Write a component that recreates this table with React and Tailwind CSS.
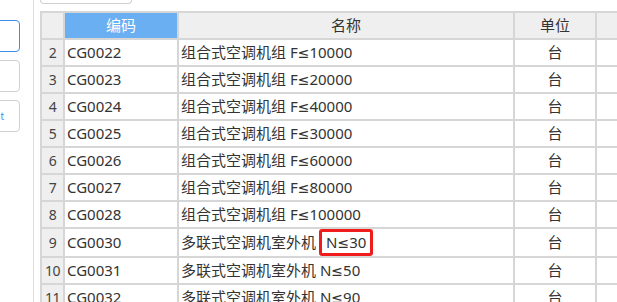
const rows = [
  ["2", "CG0022", "组合式空调机组 F", "10000"],
  ["3", "CG0023", "组合式空调机组 F", "20000"],
  ["4", "CG0024", "组合式空调机组 F", "40000"],
  ["5", "CG0025", "组合式空调机组 F", "30000"],
  ["6", "CG0026", "组合式空调机组 F", "60000"],
  ["7", "CG0027", "组合式空调机组 F", "80000"],
  ["8", "CG0028", "组合式空调机组 F", "100000"],
  ["9", "CG0030", "多联式空调机室外机", "30", true],
  ["10", "CG0031", "多联式空调机室外机 N", "50"],
  ["11", "CG0032", "多联式空调机室外机 N", "90"],
];

const Le = () => <span style={{ fontFamily: '"DejaVu Sans", sans-serif' }} className="text-[14px]">≤</span>;

export default function App() {
  return (
    <div
      className="flex w-[617px] h-[302px] overflow-hidden bg-white text-[#333]"
      style={{ fontFamily: '"Noto Sans", "Noto Sans CJK SC", sans-serif' }}
    >
      {/* left side panel */}
      <div className="w-[34px] shrink-0 border-r border-[#dcdcdc] flex flex-col gap-[8px] pt-[20px] overflow-hidden">
        <div className="w-[40px] h-[32px] -ml-[20px] rounded-[4px] border border-[#3f8fe6]" />
        <div className="w-[40px] h-[32px] -ml-[20px] rounded-[4px] border border-[#d0d0d0]" />
        <div className="w-[40px] h-[32px] -ml-[20px] rounded-[4px] border border-[#d0d0d0] flex items-center justify-end pr-[15px] text-[10px] text-[#3f8fe6] leading-none">
          t
        </div>
      </div>

      {/* main */}
      <div className="flex-1 pl-[6px] flex flex-col overflow-hidden">
        <div className="w-[92px] h-[4px] shrink-0 rounded-b-[5px] border border-t-0 border-[#d0d0d0]" />
        <div className="mt-[7px]">
          <table className="table-fixed border-collapse w-[620px] text-[15px]">
            <colgroup>
              <col className="w-[23px]" />
              <col className="w-[114px]" />
              <col className="w-[336px]" />
              <col className="w-[82px]" />
              <col className="w-[65px]" />
            </colgroup>
            <thead>
              <tr className="h-[27px]">
                <th className="bg-[#efefef] border-2 border-[#d6d6d6]" />
                <th className="bg-[#6aaff2] border-2 border-[#d6d6d6] font-normal text-white">编码</th>
                <th className="bg-[#efefef] border-2 border-[#d6d6d6] font-normal text-[#333]">名称</th>
                <th className="bg-[#efefef] border-2 border-[#d6d6d6] font-normal text-[#333]">单位</th>
                <th className="bg-[#efefef] border-2 border-[#d6d6d6]" />
              </tr>
            </thead>
            <tbody>
              {rows.map((r) => (
                <tr key={r[0]} className="h-[27px]">
                  <td className="bg-[#efefef] border-2 border-[#d6d6d6] text-center text-[14px] text-[#444] p-0 tracking-[-0.5px]">
                    {r[0]}
                  </td>
                  <td className="border-2 border-[#d6d6d6] px-[2px] py-0 whitespace-nowrap">{r[1]}</td>
                  <td className="border-2 border-[#d6d6d6] px-[2px] py-0 whitespace-nowrap">
                    {r[4] ? (
                      <>
                        {r[2]}
                        <span className="inline-block ml-[3px] px-[4px] leading-[20px] border-[3px] border-[#f01c1c] rounded-[3px]">
                          N<Le />{r[3]}
                        </span>
                      </>
                    ) : (
                      <>
                        {r[2]}<Le />{r[3]}
                      </>
                    )}
                  </td>
                  <td className="border-2 border-[#d6d6d6] text-center py-0">台</td>
                  <td className="border-2 border-[#d6d6d6]" />
                </tr>
              ))}
            </tbody>
          </table>
        </div>
      </div>
    </div>
  );
}
